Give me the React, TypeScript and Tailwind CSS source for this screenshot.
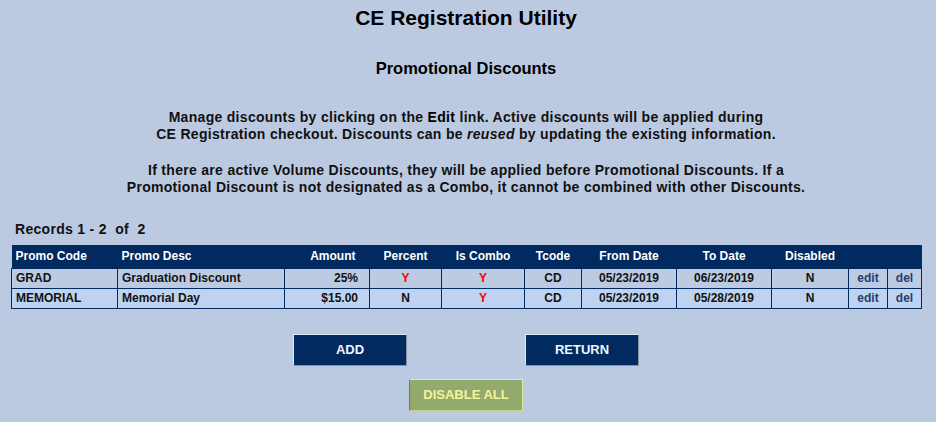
type Promo = {
  code: string;
  desc: string;
  amount: string;
  percent: string;
  combo: string;
  tcode: string;
  from: string;
  to: string;
  disabled: string;
};

const promos: Promo[] = [
  {
    code: "GRAD",
    desc: "Graduation Discount",
    amount: "25%",
    percent: "Y",
    combo: "Y",
    tcode: "CD",
    from: "05/23/2019",
    to: "06/23/2019",
    disabled: "N",
  },
  {
    code: "MEMORIAL",
    desc: "Memorial Day",
    amount: "$15.00",
    percent: "N",
    combo: "Y",
    tcode: "CD",
    from: "05/23/2019",
    to: "05/28/2019",
    disabled: "N",
  },
];

// Y shows in red, anything else in plain text
function flag(v: string) {
  return v === "Y" ? "text-[#ff0000]" : "text-[#111]";
}

export default function App() {
  const td = "border border-[#002a60] px-[4px] py-0";
  return (
    <div className="min-h-[422px] w-full bg-[#bccae1] font-['Liberation_Sans',Arial,sans-serif] text-black">
      <div className="ml-[11px] w-[910px] pt-[6px] pb-[11px]">
        <h1 className="text-center text-[21px] leading-[24px] font-bold">CE Registration Utility</h1>
        <h2 className="mt-[29px] text-center text-[16.5px] leading-[18px] font-bold">Promotional Discounts</h2>

        <p className="mt-[32px] text-center text-[14px] leading-[17px] font-bold tracking-[0.3px] text-[#111]">
          Manage discounts by clicking on the <span className="text-black">Edit</span> link. Active discounts will be
          applied during
          <br />
          CE Registration checkout. Discounts can be <i>reused</i> by updating the existing information.
        </p>
        <p className="mt-[19px] text-center text-[14px] leading-[17px] font-bold tracking-[0.3px] text-[#111]">
          If there are active Volume Discounts, they will be applied before Promotional Discounts. If a
          <br />
          Promotional Discount is not designated as a Combo, it cannot be combined with other Discounts.
        </p>

        <div className="mt-[25px] pl-[4px] text-[14px] leading-[17px] font-bold tracking-[0.3px] text-[#111] whitespace-pre">
          {"Records 1 - 2  of  2"}
        </div>

        <table className="mt-[7px] w-[910px] table-fixed border-collapse text-[12px] font-bold">
          <colgroup>
            <col className="w-[106px]" />
            <col className="w-[167px]" />
            <col className="w-[85px]" />
            <col className="w-[72px]" />
            <col className="w-[83px]" />
            <col className="w-[57px]" />
            <col className="w-[95px]" />
            <col className="w-[95px]" />
            <col className="w-[77px]" />
            <col className="w-[39px]" />
            <col className="w-[34px]" />
          </colgroup>
          <thead>
            <tr className="h-[23px] bg-[#002a60] text-white">
              <th className="px-[4px] text-left font-bold">Promo Code</th>
              <th className="px-[4px] text-left font-bold">Promo Desc</th>
              <th className="pr-[14px] text-right font-bold">Amount</th>
              <th className="text-center font-bold">Percent</th>
              <th className="text-center font-bold">Is Combo</th>
              <th className="text-center font-bold">Tcode</th>
              <th className="text-center font-bold">From Date</th>
              <th className="text-center font-bold">To Date</th>
              <th className="text-center font-bold">Disabled</th>
              <th colSpan={2}></th>
            </tr>
          </thead>
          <tbody>
            {promos.map((p, i) => (
              <tr key={p.code} className={`h-[20px] text-[#111] ${i === 0 ? "bg-[#bccbe2]" : "bg-[#bed3f0]"}`}>
                <td className={td}>{p.code}</td>
                <td className={td}>{p.desc}</td>
                <td className={`${td} pr-[11px] text-right`}>{p.amount}</td>
                <td className={`${td} text-center ${flag(p.percent)}`}>{p.percent}</td>
                <td className={`${td} text-center ${flag(p.combo)}`}>{p.combo}</td>
                <td className={`${td} text-center`}>{p.tcode}</td>
                <td className={`${td} text-center`}>{p.from}</td>
                <td className={`${td} text-center`}>{p.to}</td>
                <td className={`${td} text-center`}>{p.disabled}</td>
                <td className={`${td} text-center text-[#22406e]`}>edit</td>
                <td className={`${td} text-center text-[#22406e]`}>del</td>
              </tr>
            ))}
          </tbody>
        </table>

        <div className="mt-[25px] flex justify-center gap-[118px]">
          <button className="h-[32px] w-[114px] border border-t-[#e4ebf5] border-l-[#e4ebf5] border-r-[#8a93a0] border-b-[#8a93a0] bg-[#002a60] text-[13px] font-bold text-[#f2f6ff]">
            ADD
          </button>
          <button className="h-[32px] w-[114px] border border-t-[#e4ebf5] border-l-[#e4ebf5] border-r-[#8a93a0] border-b-[#8a93a0] bg-[#002a60] text-[13px] font-bold text-[#f2f6ff]">
            RETURN
          </button>
        </div>
        <div className="mt-[13px] flex justify-center">
          <button className="h-[32px] w-[114px] border border-t-[#e3eb9c] border-r-[#e3eb9c] border-l-[#6f7d5a] border-b-[#c9d188] bg-[#93aa6c] text-[13px] font-bold text-[#f3f59c]">
            DISABLE ALL
          </button>
        </div>
      </div>
    </div>
  );
}
